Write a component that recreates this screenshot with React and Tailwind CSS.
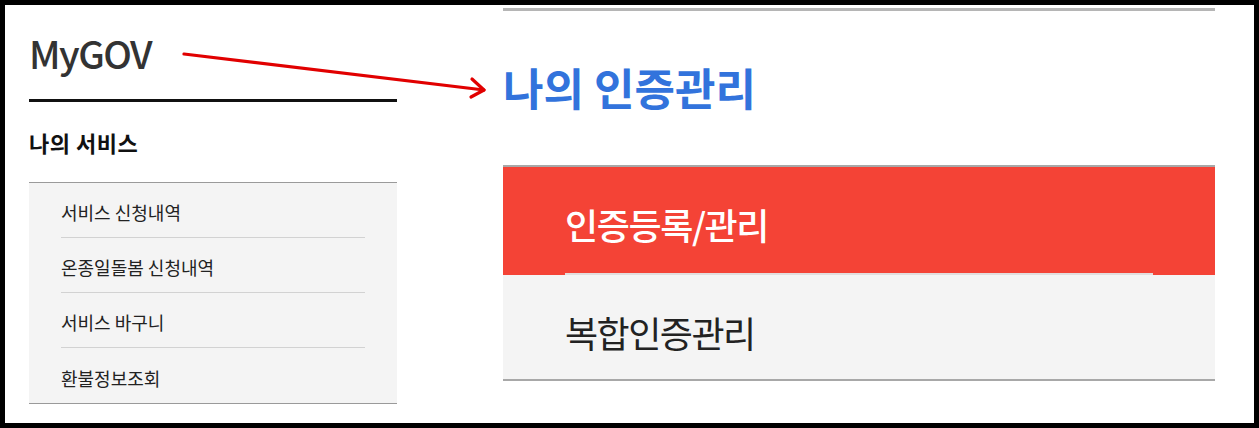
import React from 'react';

const kr = { fontFamily: '"Noto Sans CJK KR", "Noto Sans", sans-serif' };

const myServices = ['서비스 신청내역', '온종일돌봄 신청내역', '서비스 바구니', '환불정보조회'];

// 오른쪽 인증관리 탭 목록
const authTabs = [
  { label: '인증등록/관리', active: true },
  { label: '복합인증관리', active: false },
];

function Arrow() {
  return (
    <svg
      className="absolute left-0 top-0 pointer-events-none"
      width="1259"
      height="428"
      viewBox="0 0 1259 428"
    >
      <line x1="184" y1="54" x2="484" y2="90" stroke="#e10000" strokeWidth="3.2" strokeLinecap="round" />
      <polyline
        points="472,79 484,90 471,97"
        fill="none"
        stroke="#e10000"
        strokeWidth="3.2"
        strokeLinecap="round"
        strokeLinejoin="round"
      />
    </svg>
  );
}

export default function App() {
  return (
    <div className="relative w-[1259px] h-[428px] bg-black p-[5px] overflow-hidden" style={kr}>
      <div className="flex h-full bg-white">
        {/* 왼쪽 메뉴 */}
        <div className="ml-[24px] w-[368px] flex flex-col">
          <div className="pt-[28px] text-[38px] leading-[40px] font-medium text-[#333] tracking-[-1.5px]">MyGOV</div>
          <div className="mt-[26px] h-[3px] bg-[#111]" />
          <div className="mt-[29px] text-[22px] leading-[22px] font-bold text-[#111] tracking-[0.5px]">나의 서비스</div>
          <ul className="mt-[29px] bg-[#f4f4f4] border-t border-b border-[#9a9a9a]">
            {myServices.map((s, i) => (
              <li
                key={s}
                className={
                  'mx-[32px] h-[55px] flex items-center pt-[5px] text-[18px] text-[#222] tracking-[0px] ' +
                  (i < myServices.length - 1 ? 'border-b border-[#d2d2d2]' : '')
                }
              >
                {s}
              </li>
            ))}
          </ul>
        </div>

        {/* 오른쪽 본문 */}
        <div className="ml-[106px] w-[712px] flex flex-col">
          <div className="mt-[3px] h-[3px] bg-[#b5b5b5]" />
          <h1 className="mt-[54px] text-[44px] leading-[44px] font-bold text-[#3273dc] tracking-[0px]">나의 인증관리</h1>
          <div className="mt-[56px] border-t-2 border-b-2 border-[#a8a8a8]">
            {authTabs.map((t) =>
              t.active ? (
                <div key={t.label} className="h-[108px] bg-[#f44336]">
                  <div className="mx-[62px] h-full flex items-center pt-[8px] border-b-2 border-[#e2dede] text-[36px] font-medium text-white tracking-[-1.4px]">
                    {t.label}
                  </div>
                </div>
              ) : (
                <div key={t.label} className="h-[104px] bg-[#f4f4f4]">
                  <div className="mx-[62px] h-full flex items-center pt-[10px] text-[36px] text-[#222] tracking-[-1.5px]">
                    {t.label}
                  </div>
                </div>
              )
            )}
          </div>
        </div>
      </div>
      <Arrow />
    </div>
  );
}
